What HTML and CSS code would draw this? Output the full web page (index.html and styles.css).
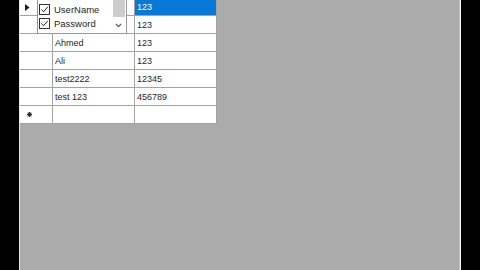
FILE: index.html
```html
<!DOCTYPE html>
<html>
<head>
<meta charset="utf-8">
<link rel="stylesheet" href="styles.css">
</head>
<body>
<div class="screen">
  <div class="bezel-left"></div>
  <div class="edge-left"></div>
  <div class="workspace">
    <div class="grid">
      <div class="row">
        <div class="cell head"><svg class="tri" width="5" height="7" viewBox="0 0 5 7"><polygon points="0,0 4.5,3.5 0,7" fill="#1a1a1a"/></svg></div>
        <div class="cell data"></div>
        <div class="cell data selected">123</div>
      </div>
      <div class="row">
        <div class="cell head"></div>
        <div class="cell data"></div>
        <div class="cell data">123</div>
      </div>
      <div class="row">
        <div class="cell head"></div>
        <div class="cell data">Ahmed</div>
        <div class="cell data">123</div>
      </div>
      <div class="row">
        <div class="cell head"></div>
        <div class="cell data">Ali</div>
        <div class="cell data">123</div>
      </div>
      <div class="row">
        <div class="cell head"></div>
        <div class="cell data">test2222</div>
        <div class="cell data">12345</div>
      </div>
      <div class="row">
        <div class="cell head"></div>
        <div class="cell data">test 123</div>
        <div class="cell data">456789</div>
      </div>
      <div class="row">
        <div class="cell head"><svg class="star" width="5" height="5" viewBox="0 0 5 5"><g stroke="#333" stroke-width="1.1"><line x1="2.5" y1="0" x2="2.5" y2="5"/><line x1="0" y1="2.5" x2="5" y2="2.5"/><line x1="0.7" y1="0.7" x2="4.3" y2="4.3"/><line x1="4.3" y1="0.7" x2="0.7" y2="4.3"/></g></svg></div>
        <div class="cell data"></div>
        <div class="cell data"></div>
      </div>
    </div>
    <div class="popup">
      <div class="items">
        <div class="item"><span class="check"><svg width="9" height="9" viewBox="0 0 9 9"><polyline points="1.5,4.5 3.6,6.8 7.8,1.8" fill="none" stroke="#222" stroke-width="1"/></svg></span><span class="label">UserName</span></div>
        <div class="item"><span class="check"><svg width="9" height="9" viewBox="0 0 9 9"><polyline points="1.5,4.5 3.6,6.8 7.8,1.8" fill="none" stroke="#222" stroke-width="1"/></svg></span><span class="label">Password</span></div>
      </div>
      <div class="scrollbar">
        <div class="thumb"></div>
        <div class="arrow"><svg width="7" height="5" viewBox="0 0 7 5"><polyline points="1,1 3.5,3.6 6,1" fill="none" stroke="#555" stroke-width="1.1"/></svg></div>
      </div>
    </div>
  </div>
  <div class="edge-right"></div>
  <div class="bezel-right"></div>
</div>
</body>
</html>
```

FILE: styles.css
```css
html, body {
  margin: 0;
  padding: 0;
  width: 480px;
  height: 270px;
  overflow: hidden;
  background: #000;
}
.screen {
  display: flex;
  width: 480px;
  height: 270px;
}
.bezel-left {
  width: 19px;
  background: #000;
}
.edge-left {
  width: 1px;
  background: #e8e8e8;
}
.workspace {
  flex: 1;
  position: relative;
  background: #ababab;
  overflow: hidden;
}
.edge-right {
  width: 2px;
  background: linear-gradient(to right, #c4c4c4 0 1px, #f2f2f2 1px 2px);
}
.bezel-right {
  width: 19px;
  background: #000;
}
.grid {
  margin-top: -2px;
  display: flex;
  flex-direction: column;
  width: 197px;
  font-family: "Liberation Sans", Arial, sans-serif;
  font-size: 9px;
  color: #1e1e1e;
}
.row {
  display: flex;
  height: 18px;
}
.cell {
  box-sizing: border-box;
  height: 18px;
  background: #fff;
  border-right: 1px solid #a3a3a3;
  border-bottom: 1px solid #a3a3a3;
  display: flex;
  align-items: center;
}
.head {
  width: 33px;
  padding-left: 5px;
}
.data {
  width: 82px;
  padding-left: 2px;
}
.selected {
  background: #0a78d7;
  color: #fff;
}
.tri {
  display: block;
  margin-top: 1px;
}
.star {
  display: block;
  margin-left: 2px;
}
.popup {
  position: absolute;
  left: 17px;
  top: -1px;
  width: 90px;
  height: 35px;
  box-sizing: border-box;
  border: 1px solid #999;
  background: #fff;
  display: flex;
  font-family: "Liberation Sans", Arial, sans-serif;
  font-size: 9.5px;
  color: #1e1e1e;
}
.items {
  flex: 1;
  padding-top: 2px;
}
.item {
  height: 14px;
  display: flex;
  align-items: center;
}
.check {
  box-sizing: border-box;
  width: 11px;
  height: 11px;
  margin-left: 1px;
  margin-right: 4px;
  border: 1px solid #333;
  display: flex;
  align-items: center;
  justify-content: center;
}
.check svg {
  display: block;
}
.scrollbar {
  width: 13px;
  margin-right: 1px;
  display: flex;
  flex-direction: column;
  align-items: center;
}
.thumb {
  width: 12px;
  height: 17px;
  background: #cdcdcd;
}
.arrow {
  margin-top: 6px;
}
.arrow svg {
  display: block;
}
```
